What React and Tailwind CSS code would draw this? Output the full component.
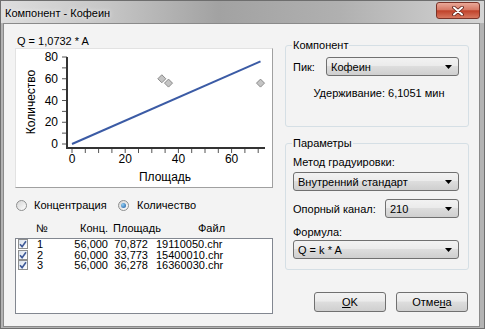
const Check = () => (
  <span className="w-[10px] h-[10px] shrink-0 border border-[#8e8f8f] bg-[linear-gradient(135deg,#d9e1ec,#ffffff)] flex items-center justify-center">
    <svg width="8" height="8" viewBox="0 0 8 8">
      <path d="M1 4.2 L3.1 6.6 L7 1.2" stroke="#3f5a98" strokeWidth="1.6" fill="none" />
    </svg>
  </span>
);

const Radio = ({ checked }) => (
  <span className="w-[11px] h-[11px] shrink-0 rounded-full border border-[#8e8f8f] bg-[linear-gradient(135deg,#d4d4d4,#ffffff)] flex items-center justify-center">
    {checked && (
      <span className="w-[5px] h-[5px] rounded-full bg-[radial-gradient(circle_at_35%_35%,#8fd0f8,#1b549a)]" />
    )}
  </span>
);

const Combo = ({ text, className }) => (
  <div
    className={
      "h-[19px] flex items-center justify-between pl-[4px] pr-[6px] border border-[#707070] rounded-[3px] bg-[linear-gradient(#f2f2f2,#ebebeb_45%,#dddddd_50%,#cfcfcf)] " +
      className
    }
  >
    <span>{text}</span>
    <svg width="7" height="4" viewBox="0 0 7 4">
      <path d="M0 0 H7 L3.5 4 Z" fill="#000" />
    </svg>
  </div>
);

const Button = ({ children }) => (
  <button className="w-[72px] h-[20px] border border-[#707070] rounded-[3px] bg-[linear-gradient(#f2f2f2,#ebebeb_45%,#dddddd_50%,#cfcfcf)] text-center leading-[18px]">
    {children}
  </button>
);

const X = (v) => 56 + v * 2.66;
const Y = (v) => 95 - v * 1.0875;

const Chart = () => {
  const xt = [0, 5, 10, 15, 20, 25, 30, 35, 40, 45, 50, 55, 60, 65, 70];
  const yt = [0, 10, 20, 30, 40, 50, 60, 70, 80];
  const pts = [
    [33.77, 60],
    [36.28, 56],
    [70.87, 56],
  ];
  return (
    <svg width="256" height="138" className="font-['Liberation_Sans',Arial,sans-serif]">
      {yt.map((v) => (
        <line key={"y" + v} x1="46" x2="51" y1={Y(v)} y2={Y(v)} stroke="#555" />
      ))}
      {xt.map((v) => (
        <line key={"x" + v} x1={X(v)} x2={X(v)} y1="99" y2="104" stroke="#555" />
      ))}
      <line x1="51" x2="51" y1="8" y2="100" stroke="#333" strokeWidth="2" />
      <line x1="50" x2="249" y1="99" y2="99" stroke="#333" strokeWidth="2" />
      {[0, 20, 40, 60, 80].map((v) => (
        <text key={"ly" + v} x="42" y={Y(v) + 4} fontSize="12" textAnchor="end">
          {v}
        </text>
      ))}
      {[0, 20, 40, 60].map((v) => (
        <text key={"lx" + v} x={X(v)} y="114" fontSize="12" textAnchor="middle">
          {v}
        </text>
      ))}
      <text x="15" y="57" fontSize="12" textAnchor="middle" transform="rotate(-90 15 53)">
        Количество
      </text>
      <text x="149" y="132" fontSize="12" textAnchor="middle">
        Площадь
      </text>
      <line x1={X(0)} y1={Y(0)} x2={X(70.87)} y2={Y(76.05)} stroke="#3b5ba5" strokeWidth="2" />
      {pts.map(([a, b]) => (
        <path
          key={a}
          d={`M${X(a)} ${Y(b) - 4} L${X(a) + 4} ${Y(b)} L${X(a)} ${Y(b) + 4} L${X(a) - 4} ${Y(b)} Z`}
          fill="#c4c4c4"
          stroke="#8a8a8a"
        />
      ))}
    </svg>
  );
};

const rows = [
  ["1", "56,000", "70,872", "19110050.chr"],
  ["2", "60,000", "33,773", "15400010.chr"],
  ["3", "56,000", "36,278", "16360030.chr"],
];

export default function App() {
  return (
    <div className="w-[485px] h-[329px] flex flex-col bg-[#b3b3b3] border border-[#6e6e6e] font-['Liberation_Sans',Arial,sans-serif] text-[11px] leading-[14px] text-black">
      <div className="h-[22px] shrink-0 flex justify-between bg-[linear-gradient(90deg,#dedede,#c6c6c6_22%,#a2a2a2_45%,#b0b0b0_70%,#d4d4d4)]">
        <span className="pl-[4px] pt-[5px] [text-shadow:0_0_5px_#ffffff]">Компонент - Кофеин</span>
        <div className="mt-[1px] mr-[4px] w-[44px] h-[17px] rounded-[3px] border border-[#7a3328] bg-[linear-gradient(#eaa898,#d77a66_45%,#c0422a_52%,#d7775f)] flex items-center justify-center">
          <svg width="12" height="10" viewBox="0 0 12 10">
            <path d="M2 1.5 L10 8.5 M10 1.5 L2 8.5" stroke="#5a1d14" strokeWidth="3.6" strokeLinecap="round" />
            <path d="M2 1.5 L10 8.5 M10 1.5 L2 8.5" stroke="#ffffff" strokeWidth="2" strokeLinecap="round" />
          </svg>
        </div>
      </div>

      <div className="flex-1 ml-[2px] mr-[4px] mb-[1px] bg-[#f3f3f3] border border-[#8a8a8a] flex">
        {/* left */}
        <div className="ml-[11px] w-[258px] pt-[11px] flex flex-col">
          <div className="h-[13px] leading-[13px] pl-[2px]">Q = 1,0732 * A</div>
          <div className="h-[140px] bg-white border border-[#e2e2e2] border-r-[#a0a0a0] border-b-[#a0a0a0]">
            <Chart />
          </div>
          <div className="mt-[10px] h-[14px] flex items-center">
            <div className="w-[103px] pl-[1px] flex items-center">
              <Radio />
              <span className="ml-[7px]">Концентрация</span>
            </div>
            <Radio checked />
            <span className="ml-[8px]">Количество</span>
          </div>
          <div className="mt-[9px] h-[14px] flex">
            <span className="ml-[21px] w-[40px]">№</span>
            <span className="w-[32px] text-right">Конц.</span>
            <span className="ml-[5px] w-[85px]">Площадь</span>
            <span>Файл</span>
          </div>
          <div className="mt-[3px] h-[76px] bg-white border border-[#828790] flex flex-col">
            {rows.map((r) => (
              <div key={r[0]} className="h-[10.5px] flex items-center pl-[2px] leading-[10px]">
                <Check />
                <span className="ml-[9px] w-[20px]">{r[0]}</span>
                <span className="w-[51px] text-right">{r[1]}</span>
                <span className="w-[40px] text-right">{r[2]}</span>
                <span className="ml-[8px]">{r[3]}</span>
              </div>
            ))}
          </div>
        </div>

        {/* right */}
        <div className="ml-[12px] w-[184px] pt-[14px] flex flex-col">
          <fieldset className="border border-[#d5dfe5] rounded-[3px]">
            <legend className="ml-[6px] px-[1px] leading-[14px]">Компонент</legend>
            <div className="px-[7px] pb-[26px]">
              <div className="mt-[5px] h-[19px] flex items-center">
                <span className="w-[33px]">Пик:</span>
                <Combo text="Кофеин" className="w-[133px]" />
              </div>
              <div className="mt-[10px] text-center pl-[4px]">Удерживание: 6,1051 мин</div>
            </div>
          </fieldset>

          <fieldset className="mt-[9px] border border-[#d5dfe5] rounded-[3px]">
            <legend className="ml-[6px] px-[1px] leading-[14px]">Параметры</legend>
            <div className="px-[7px] pb-[10px]">
              <div className="mt-[5px]">Метод градуировки:</div>
              <Combo text="Внутренний стандарт" className="mt-[3px] w-[166px]" />
              <div className="mt-[8px] h-[19px] flex items-center">
                <span className="w-[92px]">Опорный канал:</span>
                <Combo text="210" className="w-[74px]" />
              </div>
              <div className="mt-[7px]">Формула:</div>
              <Combo text="Q = k * A" className="mt-[1px] w-[166px]" />
            </div>
          </fieldset>

          <div className="mt-[22px] flex justify-end gap-[10px] pr-[1px]">
            <Button>
              <span className="underline">O</span>K
            </Button>
            <Button>
              Отме<span className="underline">н</span>а
            </Button>
          </div>
        </div>
      </div>
    </div>
  );
}
